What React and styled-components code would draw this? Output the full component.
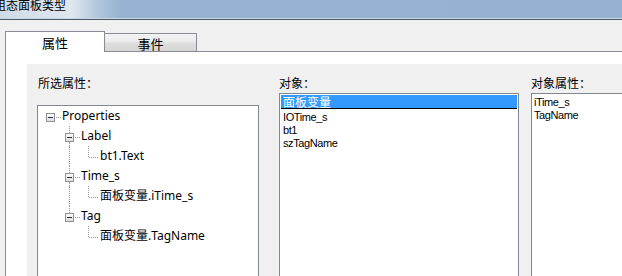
import React from 'react';
import styled, { createGlobalStyle } from 'styled-components';

const GlobalStyle = createGlobalStyle`
  html, body {
    margin: 0;
    padding: 0;
    background: #f0f0f0;
    overflow: hidden;
  }
  body {
    width: 622px;
    height: 276px;
    font-family: "Noto Sans", "Noto Sans CJK SC", sans-serif;
  }
`;

const Window = styled.div`
  width: 622px;
  height: 276px;
  overflow: hidden;
  background: #f0f0f0;
`;

const Caption = styled.div`
  border-bottom: 1px solid #4f5963;
`;

const TitleBar = styled.div`
  height: 18px;
  border-bottom: 1px solid #c8d8e8;
  background: linear-gradient(to right, #cfdbe7 0, #dfe7f0 72px, #b3c8dc 96px, #96b4d1 120px, #95b3d0 100%);
  overflow: hidden;
`;

const TitleText = styled.div`
  margin: -1px 0 0 -6px;
  font-family: "Noto Sans CJK SC", sans-serif;
  font-size: 12px;
  line-height: 12px;
  color: #000;
  white-space: nowrap;
`;

const TabStrip = styled.div`
  display: flex;
  align-items: flex-end;
  margin-top: 11px;
  padding-left: 5px;
  height: 21px;
`;

const Tab = styled.div`
  display: flex;
  align-items: center;
  justify-content: center;
  box-sizing: border-box;
  font-family: "Noto Sans CJK SC", sans-serif;
  font-size: 13px;
  color: #000;
  border: 1px solid #898c95;
  ${(p) =>
    p.$active
      ? `
    width: 100px;
    height: 21px;
    border-bottom: none;
    background: #fff;
  `
      : `
    width: 92px;
    height: 19px;
    border-left: none;
    background: linear-gradient(#f3f3f3 0, #ebebeb 45%, #dddddd 55%, #d6d6d6 100%);
    padding-top: 1px;
  `}
`;

const StripRest = styled.div`
  flex: 1;
  height: 0;
  border-bottom: 1px solid #898c95;
`;

const TabPage = styled.div`
  margin-left: 5px;
  border-left: 1px solid #898c95;
  background: #fff;
  padding: 12px 0 0 21px;
  height: 240px;
`;

const Panel = styled.div`
  display: flex;
  align-items: flex-start;
  background: #f0f0f0;
  padding: 12px 0 0 10px;
  height: 220px;
`;

const Column = styled.div`
  display: flex;
  flex-direction: column;
  flex: none;
  width: ${(p) => p.$width}px;
  margin-left: ${(p) => p.$gap || 0}px;
`;

const FieldLabel = styled.div`
  font-family: "Noto Sans CJK SC", sans-serif;
  font-size: 12px;
  line-height: 14px;
  height: 14px;
  color: #000;
  padding-left: ${(p) => p.$indent || 0}px;
  white-space: nowrap;
`;

const Tree = styled.div`
  margin-top: 15px;
  height: 200px;
  background: #fff;
  border: 1px solid #828790;
  padding-left: 8px;
`;

const TreeRow = styled.div`
  display: flex;
  height: 20px;
  align-items: stretch;
`;

const Guide = styled.div`
  position: relative;
  width: 19px;
  flex: none;
  &::before {
    content: '';
    display: ${(p) => (p.$on ? 'block' : 'none')};
    position: absolute;
    left: 4px;
    top: 0;
    bottom: 0;
    border-left: 1px dotted #9a9a9a;
  }
`;

const Node = styled.div`
  position: relative;
  width: 16px;
  flex: none;
  &::before {
    content: '';
    display: ${(p) => (p.$above ? 'block' : 'none')};
    position: absolute;
    left: 4px;
    top: 0;
    height: ${(p) => (p.$leaf ? 11 : 7)}px;
    border-left: 1px dotted #9a9a9a;
  }
  &::after {
    content: '';
    display: ${(p) => (p.$below ? 'block' : 'none')};
    position: absolute;
    left: 4px;
    top: 16px;
    bottom: 0;
    border-left: 1px dotted #9a9a9a;
  }
`;

const Branch = styled.span`
  position: absolute;
  top: 11px;
  left: ${(p) => (p.$leaf ? 5 : 10)}px;
  width: ${(p) => (p.$leaf ? 9 : 5)}px;
  border-top: 1px dotted #9a9a9a;
`;

const Toggle = styled.span`
  position: absolute;
  left: 0;
  top: 7px;
  box-sizing: border-box;
  width: 9px;
  height: 9px;
  border: 1px solid #919191;
  background: linear-gradient(#ffffff, #dcdcdc);
  &::after {
    content: '';
    position: absolute;
    left: 1px;
    top: 3px;
    width: 5px;
    height: 1px;
    background: #1f2f4a;
  }
`;

const NodeText = styled.span`
  font-size: 12px;
  line-height: 20px;
  color: #000;
  white-space: nowrap;
  font-family: "Noto Sans", "Noto Sans CJK SC", sans-serif;
`;

const ListBox = styled.div`
  margin-top: 3px;
  height: 200px;
  background: #fff;
  border: 1px solid #828790;
  padding: ${(p) => p.$top}px 1px 0 1px;
`;

const ListItem = styled.div`
  font-family: "Liberation Sans", "Noto Sans CJK SC", sans-serif;
  font-size: 11px;
  letter-spacing: -0.4px;
  line-height: 13px;
  color: #000;
  padding-left: ${(p) => p.$pad}px;
  white-space: nowrap;
`;

const SelectedItem = styled.div`
  font-family: "Noto Sans CJK SC", sans-serif;
  font-size: 12px;
  line-height: 13px;
  height: 13px;
  color: #fff;
  background: #3399ff;
  padding-left: 2px;
  border-bottom: 1px solid #000;
  margin-bottom: 2px;
  white-space: nowrap;
`;

const treeRows = [
  { text: 'Properties', guides: [], toggle: true, above: false, below: false },
  { text: 'Label', guides: [false], toggle: true, above: true, below: true },
  { text: 'bt1.Text', guides: [false, true] },
  { text: 'Time_s', guides: [false], toggle: true, above: true, below: true },
  { text: '面板变量.iTime_s', guides: [false, true] },
  { text: 'Tag', guides: [false], toggle: true, above: true, below: false },
  { text: '面板变量.TagName', guides: [false, false] },
];

const objects = ['IOTime_s', 'bt1', 'szTagName'];
const objectProps = ['iTime_s', 'TagName'];

export default function App() {
  return (
    <Window>
      <GlobalStyle />
      <Caption>
        <TitleBar>
          <TitleText>组态面板类型</TitleText>
        </TitleBar>
      </Caption>

      <TabStrip>
        <Tab $active>属性</Tab>
        <Tab>事件</Tab>
        <StripRest />
      </TabStrip>

      <TabPage>
        <Panel>
          <Column $width={222}>
            <FieldLabel $indent={1}>所选属性：</FieldLabel>
            <Tree>
              {treeRows.map((row, i) => (
                <TreeRow key={i}>
                  {row.guides.map((on, j) => (
                    <Guide key={j} $on={on} />
                  ))}
                  {row.toggle ? (
                    <Node $above={row.above} $below={row.below}>
                      <Toggle />
                      <Branch />
                    </Node>
                  ) : (
                    <Node $leaf $above>
                      <Branch $leaf />
                    </Node>
                  )}
                  <NodeText>{row.text}</NodeText>
                </TreeRow>
              ))}
            </Tree>
          </Column>

          <Column $width={240} $gap={20}>
            <FieldLabel>对象：</FieldLabel>
            <ListBox $top={1}>
              <SelectedItem>面板变量</SelectedItem>
              {objects.map((o) => (
                <ListItem key={o} $pad={2}>
                  {o}
                </ListItem>
              ))}
            </ListBox>
          </Column>

          <Column $width={150} $gap={12}>
            <FieldLabel>对象属性：</FieldLabel>
            <ListBox $top={2}>
              {objectProps.map((o) => (
                <ListItem key={o} $pad={1}>
                  {o}
                </ListItem>
              ))}
            </ListBox>
          </Column>
        </Panel>
      </TabPage>
    </Window>
  );
}
